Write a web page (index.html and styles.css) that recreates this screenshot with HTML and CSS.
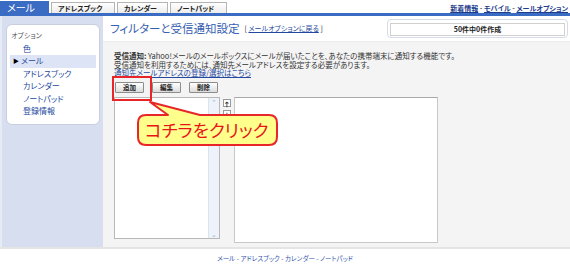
FILE: index.html
```html
<html>
  <head>
    <title>フィルターと受信通知設定</title>
    <link rel="stylesheet" href="styles.css">
  </head>
  <body>
    <div class="topbar">
      <div class="tabs">
        <div class="tab active">メール</div>
        <div class="tab t2">アドレスブック</div>
        <div class="tab t3">カレンダー</div>
        <div class="tab t4">ノートパッド</div>
      </div>
      <div class="toplinks">
        <a href="#">新着情報</a> - <a href="#">モバイル</a> - <a href="#">メールオプション</a>
      </div>
    </div>
    <div class="bluebar"></div>

    <div class="wrap">
      <div class="sidebar">
        <div class="menu">
          <div class="menuTitle">オプション</div>
          <a class="item" href="#">色</a>
          <div class="item selected"><span class="arrow">&#9654;</span>メール</div>
          <a class="item" href="#">アドレスブック</a>
          <a class="item" href="#">カレンダー</a>
          <a class="item" href="#">ノートパッド</a>
          <a class="item" href="#">登録情報</a>
        </div>
      </div>

      <div class="main">
        <div class="head">
          <h1>フィルターと受信通知設定</h1>
          <span class="back">[ <a href="#">メールオプションに戻る</a> ]</span>
          <div class="count"><div class="countInner">50件中0件作成</div></div>
        </div>
        <div class="content">
          <p class="desc"><b>受信通知:</b> Yahoo!メールのメールボックスにメールが届いたことを、あなたの携帯端末に通知する機能です。<br>受信通知を利用するためには、通知先メールアドレスを設定する必要があります。<br><a href="#">通知先メールアドレスの登録/選択はこちら</a></p>
          <div class="buttons">
            <button class="btn">追加</button>
            <button class="btn">編集</button>
            <button class="btn">削除</button>
          </div>
          <div class="lists">
            <div class="listbox">
              <div class="scroll">
                <span class="sarrow">&#8963;</span>
                <span class="sarrow">&#8964;</span>
              </div>
            </div>
            <div class="moves">
              <span class="mv">&#129105;</span>
              <span class="mv">&#129107;</span>
            </div>
            <div class="detail"></div>
          </div>
        </div>
      </div>
    </div>

    <div class="footer">
      <a href="#">メール</a> - <a href="#">アドレスブック</a> - <a href="#">カレンダー</a> - <a href="#">ノートパッド</a>
    </div>

    <div class="mark"></div>
    <div class="callout">
      <svg width="144" height="50" viewBox="0 0 144 50">
        <path d="M10,16 L32,16 L14,3 L64,16 L133,16 Q141,16 141,24 L141,38 Q141,46 133,46 L10,46 Q2,46 2,38 L2,24 Q2,16 10,16 Z" fill="#ffff8c" stroke="#e8262a" stroke-width="2" stroke-linejoin="round"/>
      </svg>
      <span class="calloutText">コチラをクリック</span>
    </div>
  </body>
</html>
```

FILE: styles.css
```css
body {
  margin: 0;
  width: 570px;
  position: relative;
  font-family: "Noto Sans CJK JP", "Liberation Sans", sans-serif;
  font-feature-settings: "palt";
  color: #222;
  background: #fff;
}
a {
  color: #2448a0;
}

.topbar {
  display: flex;
  justify-content: space-between;
  height: 13px;
}
.tabs {
  display: flex;
  align-items: flex-end;
}
.tab {
  height: 10px;
  margin-right: 2px;
  border: 1px solid #b4b4b4;
  border-bottom: none;
  background: linear-gradient(#ffffff, #ececec);
  font-size: 7px;
  font-weight: bold;
  line-height: 10px;
  padding-left: 6px;
  box-sizing: content-box;
}
.tab.active {
  width: 41px;
  height: 11px;
  border-color: #3b6cc4;
  background: #3b6cc4;
  color: #fff;
  font-size: 10px;
  font-weight: normal;
  line-height: 11px;
  padding-left: 6px;
}
.t2 { width: 56px; }
.t3 { width: 43px; }
.t4 { width: 49px; }
.toplinks {
  font-size: 7px;
  font-weight: bold;
  color: #555;
  padding: 3px 2px 0 0;
}
.toplinks a {
  color: #1e3c8c;
}
.bluebar {
  height: 3px;
  background: #3b6cc4;
}

.wrap {
  display: flex;
  height: 231px;
  border-bottom: 2px solid #e4e4e4;
}
.sidebar {
  width: 103px;
  background: #d6deef;
  border-left: 2px solid #e6ebf5;
  padding: 8px 0 0 4px;
  box-sizing: border-box;
}
.menu {
  width: 94px;
  height: 101px;
  background: #fff;
  border: 1px solid #c9cfdc;
  border-radius: 6px;
  box-sizing: border-box;
  padding: 5px 3px 0 3px;
}
.menuTitle {
  font-size: 7px;
  color: #555;
  padding-left: 1px;
  height: 13px;
}
.item {
  display: block;
  height: 12.4px;
  line-height: 12px;
  font-size: 8px;
  padding-left: 13px;
  text-decoration: none;
  color: #2448a0;
}
.item.selected {
  background: #dde4f5;
  padding-left: 3px;
}
.arrow {
  font-size: 6px;
  color: #000;
  margin-right: 2px;
  vertical-align: 1px;
}

.main {
  flex: 1;
  display: flex;
  flex-direction: column;
}
.head {
  height: 25px;
  display: flex;
  align-items: center;
  padding-left: 7px;
  background: #fff;
  border-bottom: 1px solid #ececec;
}
h1 {
  margin: 0 5px 2px 0;
  font-size: 11.5px;
  font-weight: normal;
  color: #3560b0;
}
.back {
  font-size: 7px;
  margin-bottom: 1px;
}
.count {
  margin-left: auto;
  margin-right: 2px;
  width: 181px;
  height: 19px;
  border: 1px solid #d5dbe8;
  border-radius: 4px;
  box-sizing: border-box;
  padding: 3px 2px;
}
.countInner {
  height: 11px;
  border: 1px solid #d0d0d0;
  font-size: 7px;
  font-weight: bold;
  text-align: center;
  line-height: 10px;
}

.content {
  flex: 1;
  background: #f4f4f4;
  padding: 10px 0 0 11px;
}
.desc {
  margin: 0;
  font-size: 7.5px;
  line-height: 8.5px;
  color: #333;
}
.buttons {
  display: flex;
  gap: 8px;
  margin-top: 4px;
  padding-left: 1px;
}
.btn {
  width: 29px;
  height: 11px;
  padding: 0;
  font-family: inherit;
  font-size: 6.5px;
  font-weight: bold;
  line-height: 9px;
  color: #222;
  background: linear-gradient(#ffffff, #dcdcdc);
  border: 1px solid #8c8c8c;
  border-radius: 1px;
}
.lists {
  display: flex;
  margin-top: 4px;
}
.listbox {
  width: 106px;
  height: 142px;
  background: #fff;
  border: 1px solid #b8b8b8;
  box-sizing: border-box;
  display: flex;
  justify-content: flex-end;
}
.scroll {
  width: 10px;
  background: #eef2fa;
  border-left: 1px solid #dde3ee;
  display: flex;
  flex-direction: column;
  justify-content: space-between;
  align-items: center;
}
.sarrow {
  font-size: 7px;
  color: #a8b0c0;
  line-height: 8px;
}
.moves {
  width: 14px;
  display: flex;
  flex-direction: column;
  align-items: center;
  padding-top: 2px;
  gap: 3px;
}
.mv {
  width: 8px;
  height: 8px;
  font-size: 7px;
  line-height: 8px;
  text-align: center;
  background: #fff;
  border: 1px solid #999;
  box-sizing: border-box;
  font-weight: bold;
}
.detail {
  width: 204px;
  height: 146px;
  background: #fff;
  border: 1px solid #c8c8c8;
  border-top-color: #a8a8a8;
  box-sizing: border-box;
}

.footer {
  text-align: center;
  font-size: 6.5px;
  line-height: 9px;
  padding-top: 5px;
  color: #3355aa;
}
.footer a {
  text-decoration: none;
  color: #3355aa;
}

.mark {
  position: absolute;
  left: 112px;
  top: 76px;
  width: 40px;
  height: 25px;
  border: 2px solid #e8262a;
  box-sizing: border-box;
}
.callout {
  position: absolute;
  left: 136px;
  top: 99px;
  width: 144px;
  height: 50px;
}
.callout svg {
  position: absolute;
  left: 0;
  top: 0;
}
.calloutText {
  position: absolute;
  left: 9px;
  top: 16px;
  font-size: 17.5px;
  line-height: 30px;
  color: #e8141a;
  white-space: nowrap;
}
```
